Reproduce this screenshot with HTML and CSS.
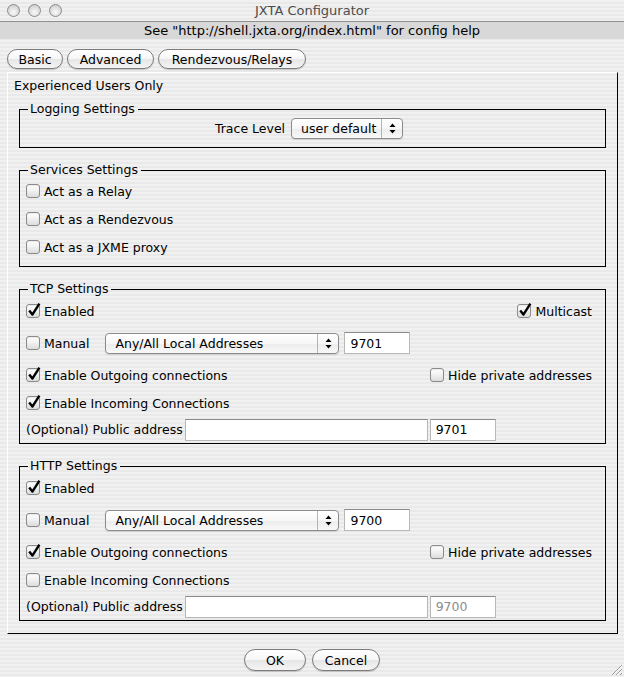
FILE: index.html
```html
<!DOCTYPE html>
<html lang="en">
<head>
    <meta charset="UTF-8">
    <title>JXTA Configurator</title>
    <link rel="stylesheet" href="styles.css">
</head>
<body>

<div class="titlebar">
    <div class="lights">
        <span class="light"></span>
        <span class="light"></span>
        <span class="light"></span>
    </div>
    <div class="title">JXTA Configurator</div>
    <div class="spacer"></div>
</div>

<div class="infobar">See "http://shell.jxta.org/index.html" for config help</div>

<div class="tabs">
    <button class="pill tab-basic">Basic</button>
    <button class="pill tab-adv">Advanced</button>
    <button class="pill tab-rdv">Rendezvous/Relays</button>
</div>

<div class="panel">
    <div class="note">Experienced Users Only</div>

    <fieldset class="group logging">
        <legend>Logging Settings</legend>
        <div class="row center">
            <span class="label">Trace Level</span>
            <div class="popup trace">
                <span class="popup-text">user default</span>
                <span class="popup-arrows"><svg width="7" height="11" viewBox="0 0 7 11"><path d="M0.5 4 L3.5 0.5 L6.5 4 Z M0.5 7 L3.5 10.5 L6.5 7 Z" fill="#000"/></svg></span>
            </div>
        </div>
    </fieldset>

    <fieldset class="group services">
        <legend>Services Settings</legend>
        <div class="row"><label class="check"><span class="box"></span>Act as a Relay</label></div>
        <div class="row"><label class="check"><span class="box"></span>Act as a Rendezvous</label></div>
        <div class="row"><label class="check"><span class="box"></span>Act as a JXME proxy</label></div>
    </fieldset>

    <fieldset class="group transport">
        <legend>TCP Settings</legend>
        <div class="row r1 split">
            <label class="check"><span class="box"><svg class="tick" viewBox="0 0 16 16"><path d="M3.2 8.6 L6.4 12.6 L13.4 1.6" fill="none" stroke="#000" stroke-width="2.4" stroke-linejoin="round"/></svg></span>Enabled</label>
            <label class="check"><span class="box"><svg class="tick" viewBox="0 0 16 16"><path d="M3.2 8.6 L6.4 12.6 L13.4 1.6" fill="none" stroke="#000" stroke-width="2.4" stroke-linejoin="round"/></svg></span>Multicast</label>
        </div>
        <div class="row r2">
            <label class="check"><span class="box"></span>Manual</label>
            <div class="popup addr">
                <span class="popup-text">Any/All Local Addresses</span>
                <span class="popup-arrows"><svg width="7" height="11" viewBox="0 0 7 11"><path d="M0.5 4 L3.5 0.5 L6.5 4 Z M0.5 7 L3.5 10.5 L6.5 7 Z" fill="#000"/></svg></span>
            </div>
            <input class="field port" value="9701">
        </div>
        <div class="row r3 split">
            <label class="check"><span class="box"><svg class="tick" viewBox="0 0 16 16"><path d="M3.2 8.6 L6.4 12.6 L13.4 1.6" fill="none" stroke="#000" stroke-width="2.4" stroke-linejoin="round"/></svg></span>Enable Outgoing connections</label>
            <label class="check"><span class="box"></span>Hide private addresses</label>
        </div>
        <div class="row r4">
            <label class="check"><span class="box"><svg class="tick" viewBox="0 0 16 16"><path d="M3.2 8.6 L6.4 12.6 L13.4 1.6" fill="none" stroke="#000" stroke-width="2.4" stroke-linejoin="round"/></svg></span>Enable Incoming Connections</label>
        </div>
        <div class="row r5">
            <span class="label">(Optional) Public address</span>
            <input class="field public" value="">
            <input class="field pport" value="9701">
        </div>
    </fieldset>

    <fieldset class="group transport">
        <legend>HTTP Settings</legend>
        <div class="row r1">
            <label class="check"><span class="box"><svg class="tick" viewBox="0 0 16 16"><path d="M3.2 8.6 L6.4 12.6 L13.4 1.6" fill="none" stroke="#000" stroke-width="2.4" stroke-linejoin="round"/></svg></span>Enabled</label>
        </div>
        <div class="row r2">
            <label class="check"><span class="box"></span>Manual</label>
            <div class="popup addr">
                <span class="popup-text">Any/All Local Addresses</span>
                <span class="popup-arrows"><svg width="7" height="11" viewBox="0 0 7 11"><path d="M0.5 4 L3.5 0.5 L6.5 4 Z M0.5 7 L3.5 10.5 L6.5 7 Z" fill="#000"/></svg></span>
            </div>
            <input class="field port" value="9700">
        </div>
        <div class="row r3 split">
            <label class="check"><span class="box"><svg class="tick" viewBox="0 0 16 16"><path d="M3.2 8.6 L6.4 12.6 L13.4 1.6" fill="none" stroke="#000" stroke-width="2.4" stroke-linejoin="round"/></svg></span>Enable Outgoing connections</label>
            <label class="check"><span class="box"></span>Hide private addresses</label>
        </div>
        <div class="row r4">
            <label class="check"><span class="box"></span>Enable Incoming Connections</label>
        </div>
        <div class="row r5">
            <span class="label">(Optional) Public address</span>
            <input class="field public" value="" disabled>
            <input class="field pport" value="9700" disabled>
        </div>
    </fieldset>
</div>

<div class="actions">
    <button class="pill ok">OK</button>
    <button class="pill cancel">Cancel</button>
</div>

<svg class="grip" width="14" height="14" viewBox="0 0 14 14">
    <path d="M13 3 L3 13 M13 7 L7 13 M13 11 L11 13" stroke="#9a9a9a" stroke-width="1"/>
    <path d="M13 4 L4 13 M13 8 L8 13" stroke="#ffffff" stroke-width="1"/>
</svg>

</body>
</html>
```

FILE: styles.css
```css
body {
    margin: 0;
    width: 624px;
    height: 677px;
    overflow: hidden;
    position: relative;
    font-family: "DejaVu Sans", sans-serif;
    font-size: 12.5px;
    color: #000;
    background: repeating-linear-gradient(#f1f1f1 0 2px, #e9e9e9 2px 4px);
}

.titlebar {
    display: flex;
    align-items: center;
    height: 21px;
    border-bottom: 1px solid #8e8e8e;
}

.lights {
    display: flex;
    gap: 8px;
    width: 70px;
    padding-left: 7px;
    box-sizing: border-box;
}

.light {
    width: 11px;
    height: 11px;
    border-radius: 50%;
    border: 1px solid #8a8a8a;
    background: radial-gradient(circle at 50% 65%, #fafafa, #d4d4d4 70%, #b8b8b8);
}

.title {
    flex: 1;
    text-align: center;
    color: #4c4c4c;
    font-size: 13px;
}

.spacer {
    width: 70px;
}

.infobar {
    height: 17px;
    line-height: 17px;
    background: #d8d8d8;
    text-align: center;
    font-size: 13px;
}

.tabs {
    display: flex;
    gap: 4px;
    margin: 10px 0 0 7px;
}

.pill {
    height: 20px;
    padding: 0;
    border: 1px solid #7c7c7c;
    border-radius: 10px;
    background: linear-gradient(#ffffff, #f6f6f6 50%, #e6e6e6 51%, #f4f4f4);
    box-shadow: 0 1px 1px rgba(0, 0, 0, 0.18);
    font-family: "DejaVu Sans", sans-serif;
    font-size: 12.5px;
    color: #000;
}

.tab-basic { width: 56px; }
.tab-adv { width: 87px; }
.tab-rdv { width: 148px; }

.panel {
    margin: 3px 6px 0 7px;
    border-top: 1px solid #fff;
    border-left: 1px solid #fff;
    border-right: 1px solid #000;
    border-bottom: 1px solid #000;
    padding: 5px 6px 12px;
}

.note {
    line-height: 16px;
    margin-bottom: 8px;
}

.group {
    margin: 15px 5px 0;
    padding: 0 13px 0 6px;
    border: 1px solid #000;
    min-width: 0;
}

.logging {
    margin-top: 0;
    padding-bottom: 7px;
}

.services {
    padding-bottom: 5px;
}

.group legend {
    margin-left: 2px;
    padding: 0 3px 0 2px;
    line-height: 14px;
}

.row {
    display: flex;
    align-items: center;
    height: 28px;
}

.row.center {
    height: 24px;
    justify-content: center;
    gap: 6px;
}

.row.split {
    justify-content: space-between;
}

.transport .r1 { height: 30px; }
.transport .r2 { height: 34px; }
.transport .r3 { height: 30px; }
.transport .r4 { height: 26px; }
.transport .r5 { height: 27px; }

.check {
    display: flex;
    align-items: center;
    gap: 4px;
    white-space: nowrap;
}

.box {
    position: relative;
    width: 12px;
    height: 12px;
    border: 1px solid #8a8a8a;
    border-radius: 3px;
    background: linear-gradient(#ffffff, #f0f0f0 50%, #dcdcdc);
    box-shadow: inset 0 1px 1px rgba(0, 0, 0, 0.08);
}

.tick {
    position: absolute;
    left: -1px;
    top: -3px;
    width: 16px;
    height: 16px;
}

.popup {
    display: flex;
    align-items: center;
    height: 19px;
    border: 1px solid #8c8c8c;
    border-radius: 4px;
    background: linear-gradient(#ffffff, #f7f7f7 50%, #ececec 51%, #f8f8f8);
    box-shadow: 0 1px 1px rgba(0, 0, 0, 0.12);
}

.popup-text {
    flex: 1;
    padding-left: 9px;
}

.popup-arrows {
    width: 20px;
    height: 100%;
    border-left: 1px solid #b4b4b4;
    display: flex;
    align-items: center;
    justify-content: center;
}

.trace { width: 110px; }

.addr {
    width: 232px;
    margin-left: 16px;
}

.field {
    box-sizing: border-box;
    height: 22px;
    border: 1px solid #b8b8b8;
    border-top-color: #8a8a8a;
    background: #fff;
    padding: 0 5px;
    font-family: "DejaVu Sans", sans-serif;
    font-size: 12.5px;
    color: #000;
}

.field:disabled {
    color: #8c8c8c;
}

.port {
    width: 66px;
    margin-left: 5px;
}

.public {
    width: 243px;
    margin-left: 2px;
}

.pport {
    width: 66px;
    margin-left: 2px;
}

.actions {
    display: flex;
    justify-content: center;
    gap: 6px;
    margin-top: 15px;
}

.ok { width: 62px; height: 22px; border-radius: 11px; }
.cancel { width: 68px; height: 22px; border-radius: 11px; }

.grip {
    position: absolute;
    right: 1px;
    bottom: 1px;
}
```
